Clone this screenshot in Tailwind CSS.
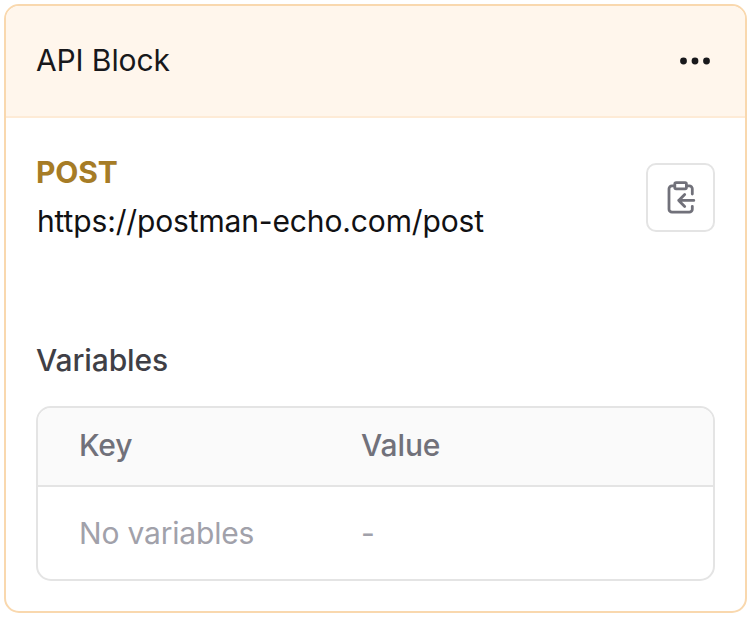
<!DOCTYPE html>
<html lang="en"><head><meta charset="utf-8"><title>API Block</title>
<script src="https://cdn.jsdelivr.net/npm/@tailwindcss/browser@4"></script></head>
<body class="bg-white font-['Inter',sans-serif] text-[30px] text-[#18181b] tracking-[-0.12px] antialiased">
<div class="w-[752px] h-[618px] pt-1 pl-1">
<section class="w-[743px] h-[609px] rounded-[15px] border-2 border-[#f9d8ae] overflow-hidden">
<header class="h-[112px] bg-[#fff6ec] border-b-2 border-[#feebd6] flex items-center justify-between pl-[30px] pr-[34px]">
<h1 class="leading-9 -mt-0.5">API Block</h1>
<svg width="32" height="8" viewBox="0 0 32 8" fill="#18181b"><circle cx="4.5" cy="4" r="3.4"/><circle cx="16" cy="4" r="3.4"/><circle cx="27.5" cy="4" r="3.4"/></svg>
</header>
<main class="px-[30px] pt-[30px]">
<div class="flex justify-between h-[92px]">
<div class="leading-[49px]"><div class="font-bold text-[#a67c26]">POST</div><div class="pl-px tracking-[-0.14px] text-[#111113]">https://postman-echo.com/post</div></div>
<button class="mt-[15px] w-[69px] h-[69px] rounded-[10px] border-2 border-[#e4e4e4] flex items-center justify-center text-[#71717a]">
<svg width="35" height="35" viewBox="663 180 35 35" fill="none" stroke="currentColor" stroke-width="2.8" stroke-linecap="round" stroke-linejoin="round"><rect x="674.8" y="182.7" width="11.6" height="6.1" rx="1.3"/><path d="M686.5 185.8h2.8a3 3 0 0 1 3 3v5.2M692.3 206.3v2.9a3 3 0 0 1-3 3H672a3 3 0 0 1-3-3V188.8a3 3 0 0 1 3-3h2.6M693.8 200.4H678.7M684.7 194.4l-6 6 6 6"/></svg></button>
</div>
<h2 class="mt-[102px] leading-9 font-medium text-[#3f3f46]">Variables</h2>
<div class="mt-[28px] h-[175px] rounded-[15px] border-2 border-[#e4e4e4] overflow-hidden">
<div class="grid grid-cols-[282px_1fr] items-center pl-[41px] pb-[3px] h-[79px] bg-[#fafafa] border-b-2 border-[#e4e4e4] font-medium text-[#71717a]"><span>Key</span><span>Value</span></div>
<div class="grid grid-cols-[282px_1fr] items-center pl-[41px] h-[92px] text-[#a1a1aa]"><span class="tracking-[-0.18px]">No variables</span><span>-</span></div>
</div></main></section></div></body></html>
